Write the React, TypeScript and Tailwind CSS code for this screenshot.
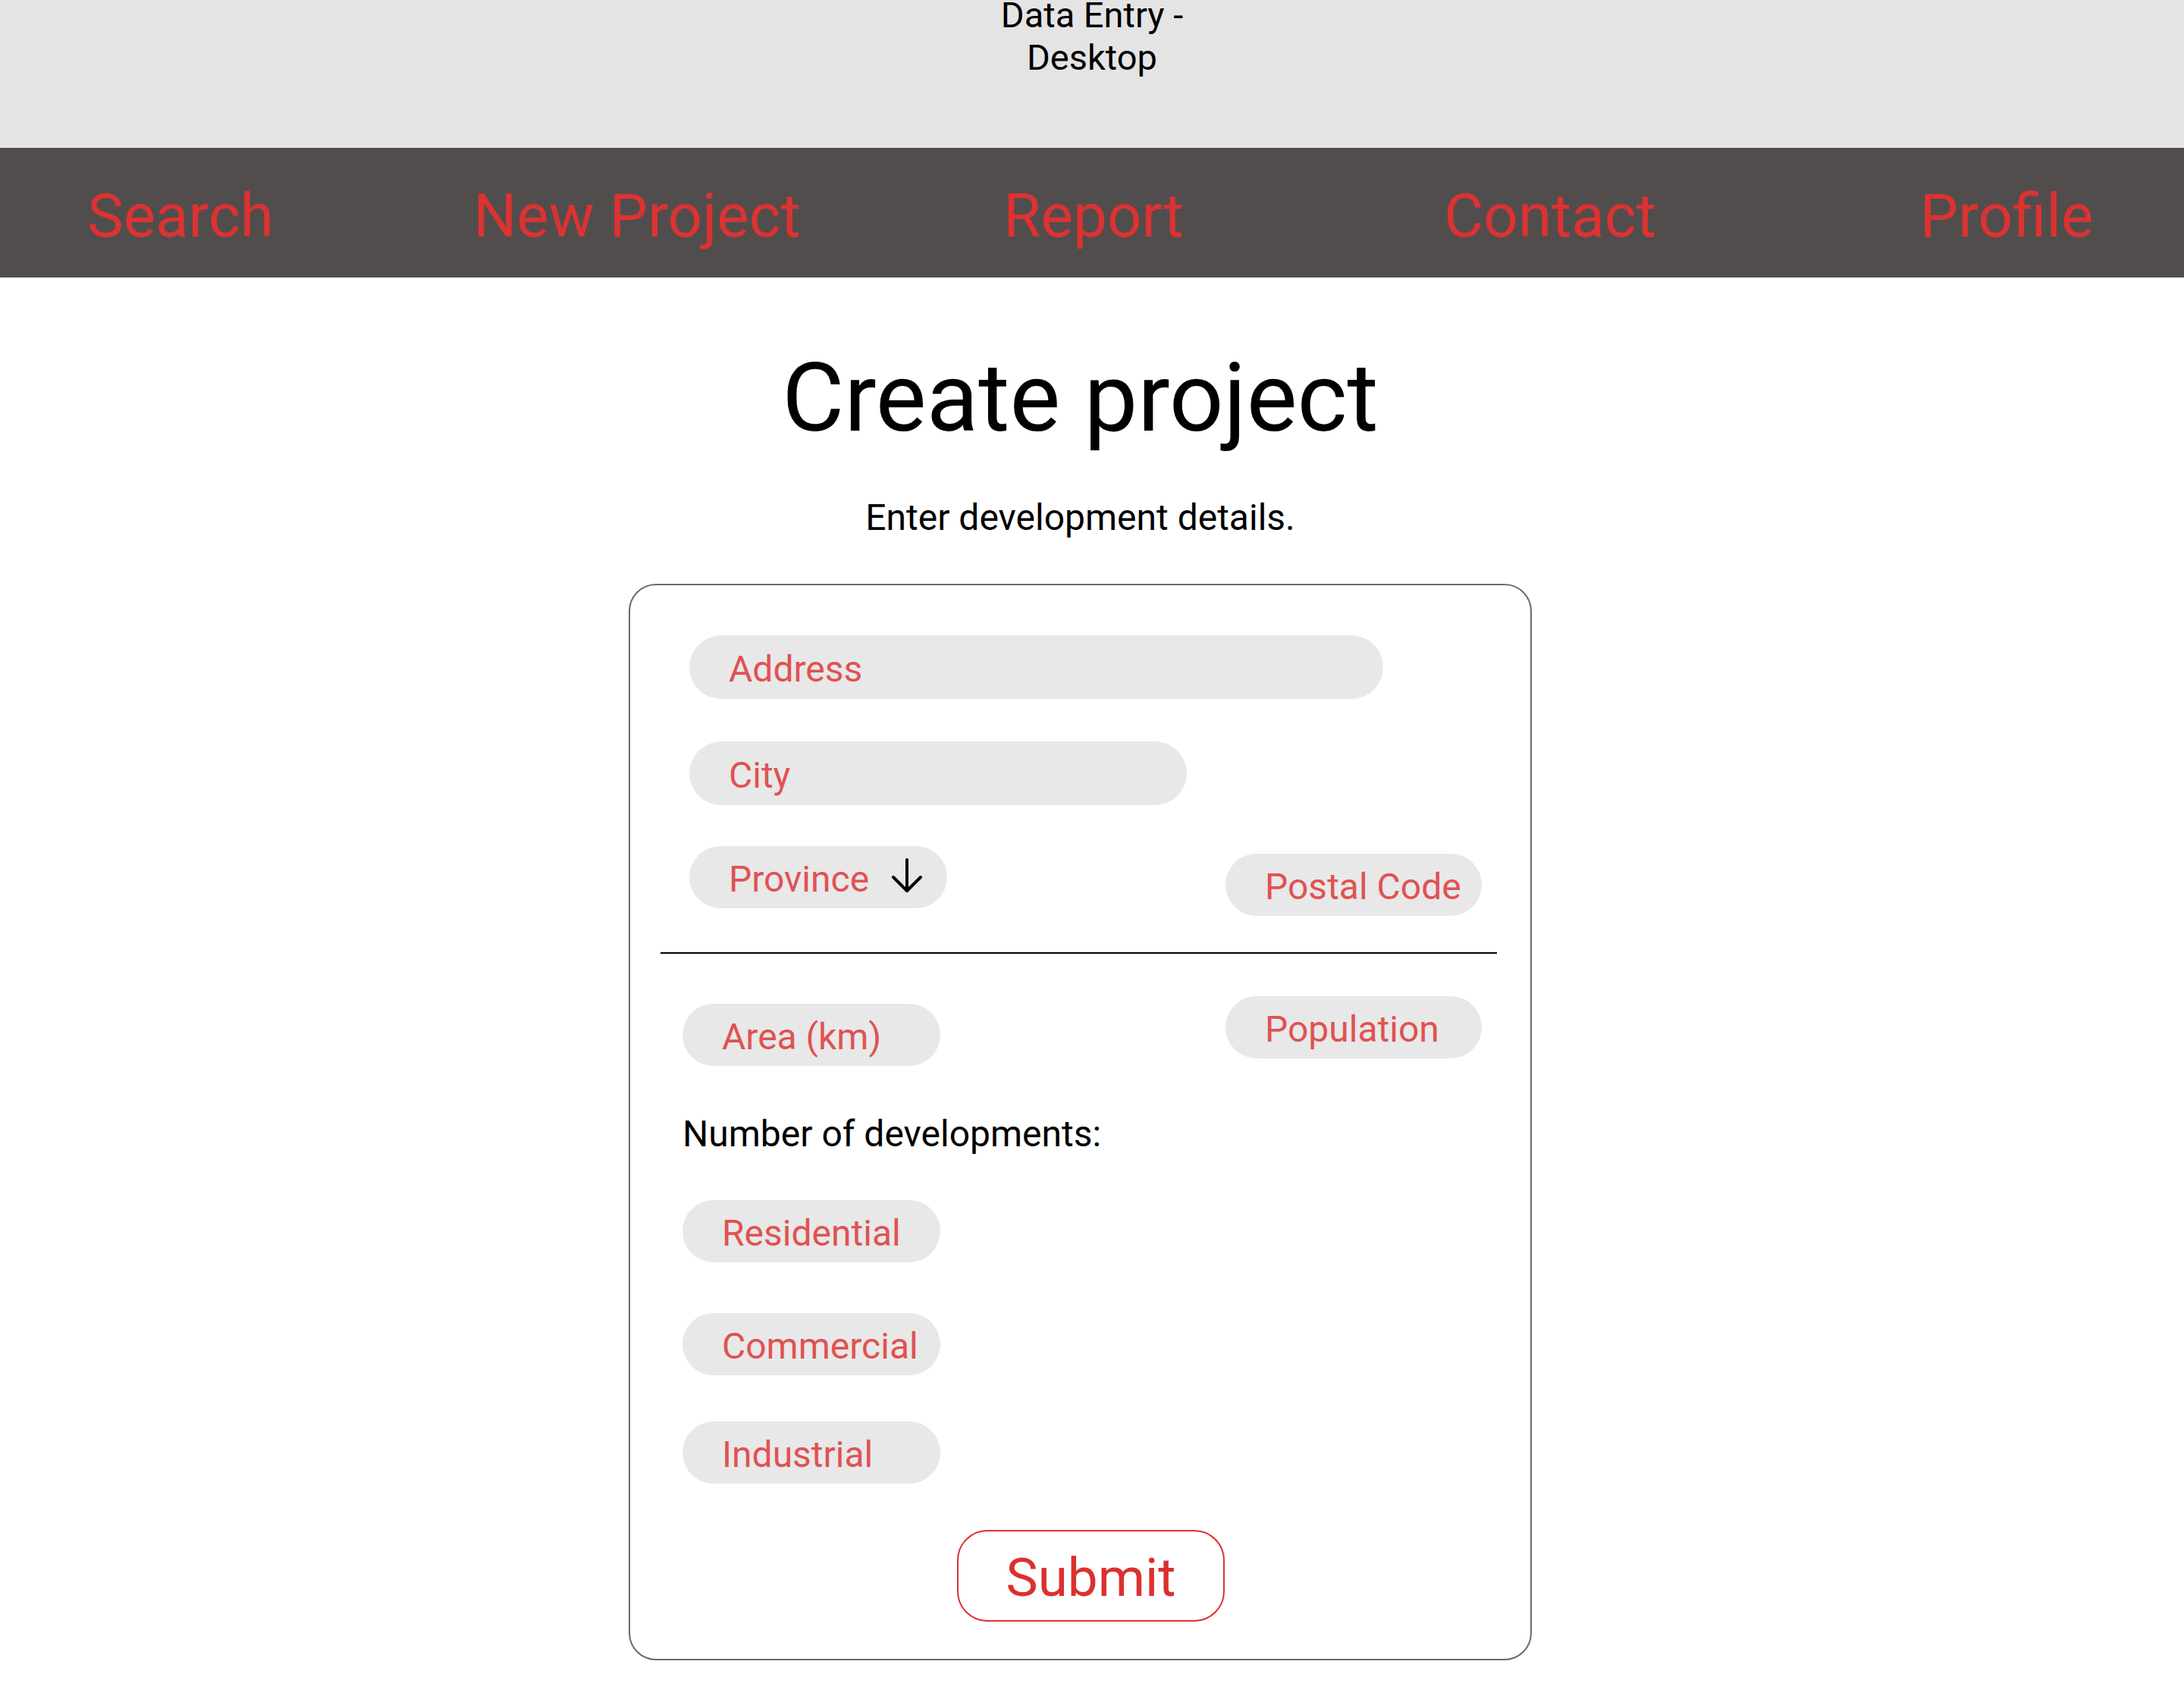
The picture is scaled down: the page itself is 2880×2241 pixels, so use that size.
import React from 'react';

const NAV_ITEMS = ['Search', 'New Project', 'Report', 'Contact', 'Profile'];

function Pill({
  label,
  width,
  height = 'h-[82px]',
  className = '',
  children,
}: {
  label: string;
  width: string;
  height?: string;
  className?: string;
  children?: React.ReactNode;
}) {
  return (
    <div
      className={`flex ${height} ${width} shrink-0 items-center rounded-full bg-[#e8e8e8] pl-[52px] pt-[6px] text-[48px] leading-[56px] text-[#e05252] ${className}`}
    >
      <span>{label}</span>
      {children}
    </div>
  );
}

function ArrowDownThin() {
  return (
    <svg width="42" height="48" viewBox="0 0 42 48" fill="none" stroke="#000" strokeWidth="4" strokeLinecap="round" strokeLinejoin="round">
      <path d="M21 3v41" />
      <path d="M3 26l18 18 18-18" />
    </svg>
  );
}

export default function App() {
  return (
    <div className="min-h-screen bg-white font-[Roboto,sans-serif] text-black">
      {/* frame title */}
      <div className="h-[195px] overflow-hidden bg-[#e4e4e4] text-center text-[47px]">
        <div className="leading-[40px]">Data Entry -</div>
        <div className="leading-[72px]">Desktop</div>
      </div>

      {/* nav */}
      <nav className="flex h-[171px] justify-center overflow-hidden bg-[#514d4c] pt-[43px] pl-[4px]">
        {NAV_ITEMS.map((item) => (
          <a key={item} href="#" className="w-[602px] shrink-0 text-center text-[80px] leading-[94px] text-[#dc3232]">
            {item}
          </a>
        ))}
      </nav>

      <main className="mx-auto flex w-full flex-col items-center pr-[31px]">
        <h1 className="mt-[96px] text-[126px] leading-[126px]">Create project</h1>
        <p className="mt-[67px] text-[48px] leading-[56px]">Enter development details.</p>

        <form className="mt-[59px] mb-[50px] flex w-[1191px] flex-col rounded-[36px] border-2 border-[#6b6b6b] pt-[66px] pb-[49px]">
          <div className="flex flex-col gap-[56px] pl-[78px]">
            <Pill label="Address" width="w-[915px]" height="h-[84px]" />
            <Pill label="City" width="w-[656px]" height="h-[84px]" />
          </div>

          <div className="mt-[54px] flex items-start justify-between pl-[78px] pr-[64px]">
            <Pill label="Province" width="w-[340px]">
              <span className="ml-[29px] -mt-[11px]">
                <ArrowDownThin />
              </span>
            </Pill>
            <Pill label="Postal Code" width="w-[338px]" className="mt-[10px]" />
          </div>

          <div className="mt-[48px] ml-[40px] mr-[44px] h-[2px] bg-black" />

          <div className="mt-[56px] flex items-start justify-between pl-[69px] pr-[64px]">
            <Pill label="Area (km)" width="w-[340px]" className="mt-[10px]" />
            <Pill label="Population" width="w-[338px]" />
          </div>

          <p className="mt-[62px] pl-[69px] text-[48px] leading-[56px]">Number of developments:</p>

          <div className="mt-[59px] flex flex-col pl-[69px]">
            <Pill label="Residential" width="w-[340px]" />
            <Pill label="Commercial" width="w-[340px]" className="mt-[67px]" />
            <Pill label="Industrial" width="w-[340px]" className="mt-[61px]" />
          </div>

          <button
            type="button"
            className="mt-[61px] ml-[431px] flex h-[121px] w-[353px] items-center justify-center rounded-[40px] border-2 border-[#dc3030] pt-[4px] text-[71px] leading-[84px] text-[#dc3030]"
          >
            Submit
          </button>
        </form>
      </main>
    </div>
  );
}
